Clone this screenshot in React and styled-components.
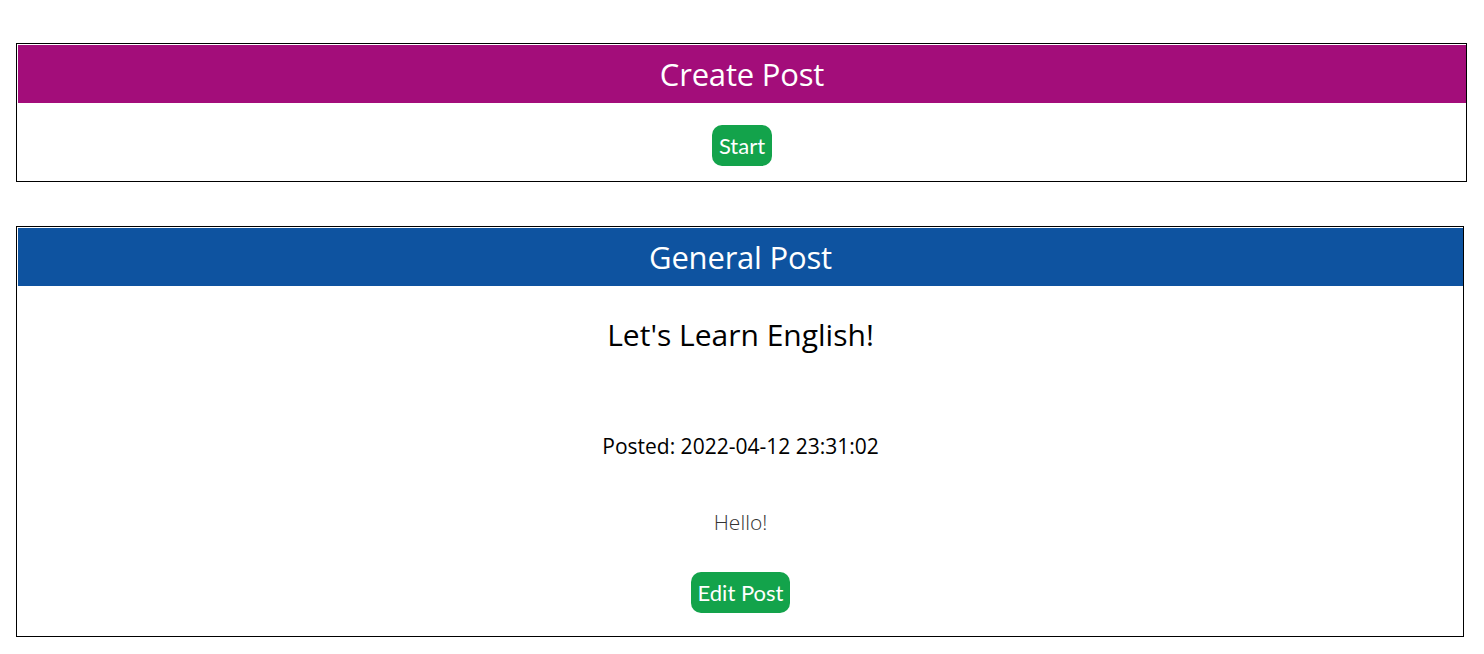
import React from "react";
import styled, { createGlobalStyle } from "styled-components";

const GlobalStyle = createGlobalStyle`
  body {
    margin: 0;
    background: #ffffff;
    font-family: "Open Sans", "Noto Sans", sans-serif;
    color: #000;
  }
`;

const Page = styled.main`
  padding: 43px 0 16px 16px;
  display: flex;
  flex-direction: column;
  gap: 44px;
`;

const Card = styled.section`
  border: 1px solid #000;
  padding: 1px 0 0 1px;
  margin-right: ${(p) => p.$gapRight}px;
  display: flex;
  flex-direction: column;
`;

const CardHeader = styled.h1`
  margin: 0;
  height: 58px;
  background: ${(p) => p.$color};
  color: #fff;
  font-family: "Open Sans", sans-serif;
  font-weight: 400;
  font-size: 31px;
  display: flex;
  align-items: center;
  justify-content: center;
  letter-spacing: -0.2px;
`;

const CardBody = styled.div`
  display: flex;
  flex-direction: column;
  align-items: center;
  padding: ${(p) => p.$pad};
  text-align: center;
`;

const PostTitle = styled.h2`
  margin: 30px 0 0;
  font-size: 30px;
  line-height: 38px;
  font-weight: 400;
`;

const PostDate = styled.p`
  margin: 78px 0 0;
  font-size: 21px;
  line-height: 28px;
`;

const PostText = styled.p`
  margin: 48px 0 0;
  font-size: 21px;
  line-height: 28px;
  font-weight: 300;
  color: #333;
`;

const Button = styled.button`
  margin-top: ${(p) => p.$top || 0}px;
  height: 41px;
  padding: 0 7px;
  border: none;
  border-radius: 10px;
  background: #13a34b;
  color: #fff;
  font-family: "Lato", "Noto Sans", sans-serif;
  font-size: 22px;
  cursor: pointer;
`;

export default function App() {
  return (
    <>
      <GlobalStyle />
      <Page>
        <Card $gapRight={17}>
          <CardHeader $color="#a30d7a">Create Post</CardHeader>
          <CardBody $pad="22px 0 15px">
            <Button>Start</Button>
          </CardBody>
        </Card>
        <Card $gapRight={20}>
          <CardHeader $color="#0e53a0">General Post</CardHeader>
          <CardBody $pad="0 0 23px">
            <PostTitle>Let's Learn English!</PostTitle>
            <PostDate>Posted: 2022-04-12 23:31:02</PostDate>
            <PostText>Hello!</PostText>
            <Button $top={36}>Edit Post</Button>
          </CardBody>
        </Card>
      </Page>
    </>
  );
}
